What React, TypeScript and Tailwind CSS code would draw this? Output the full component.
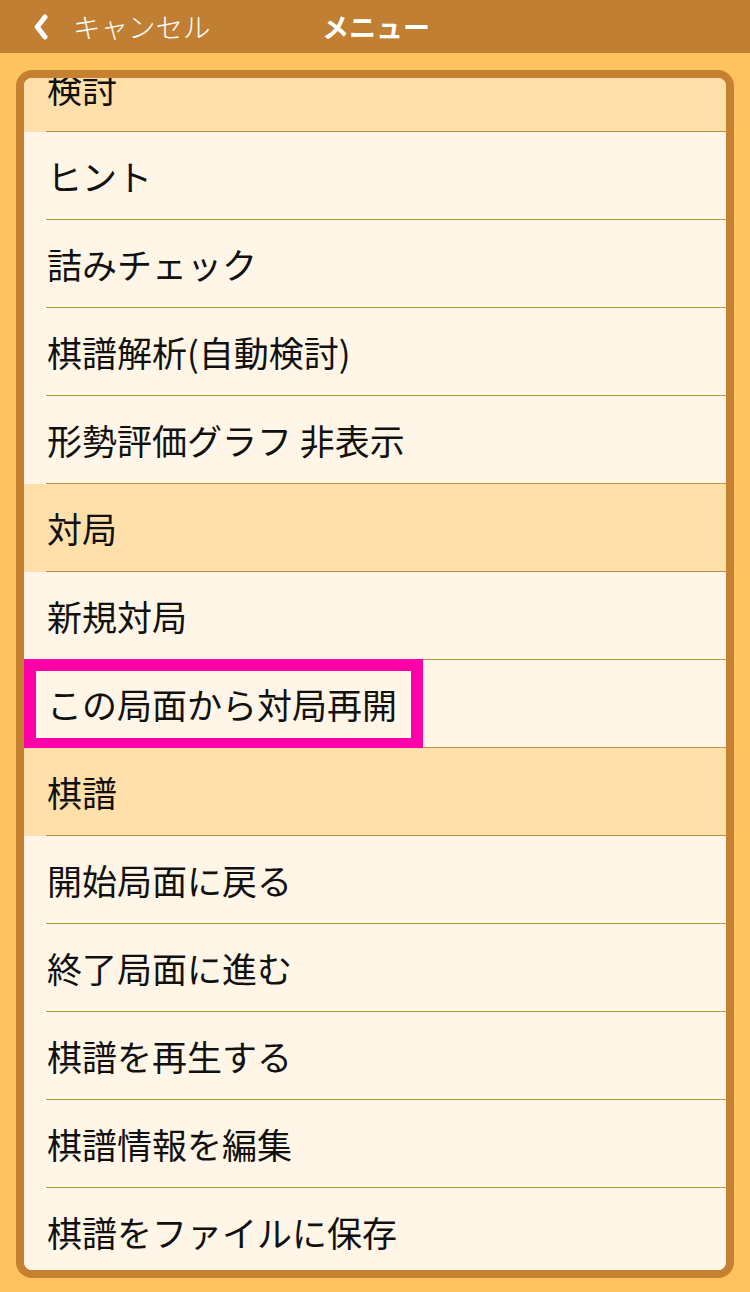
type Row = { label: string; section?: boolean; marked?: boolean }

const rows: Row[] = [
  { label: '検討', section: true },
  { label: 'ヒント' },
  { label: '詰みチェック' },
  { label: '棋譜解析(自動検討)' },
  { label: '形勢評価グラフ 非表示' },
  { label: '対局', section: true },
  { label: '新規対局' },
  { label: 'この局面から対局再開', marked: true },
  { label: '棋譜', section: true },
  { label: '開始局面に戻る' },
  { label: '終了局面に進む' },
  { label: '棋譜を再生する' },
  { label: '棋譜情報を編集' },
  { label: '棋譜をファイルに保存' },
]

const font = { fontFamily: '"Noto Sans CJK JP", "Noto Sans", sans-serif' }

function MenuRow({ row }: { row: Row }) {
  return (
    <div className={`relative h-[88px] pl-[22px] ${row.section ? 'bg-[#FFE0AA]' : 'bg-[#FFF6E7]'}`}>
      <div className="flex h-full items-center border-b border-[#B8953A] pl-px">
        <span className="text-[35px] leading-none text-[#111]">{row.label}</span>
      </div>
      {row.marked && (
        <div className="absolute left-0 -top-px h-[91px] w-[399px] border-[12px] border-[#FF00A8]" />
      )}
    </div>
  )
}

export default function App() {
  return (
    <div className="flex h-[1292px] w-[750px] flex-col overflow-hidden bg-[#FEC25F]" style={font}>
      <header className="relative flex h-[53px] shrink-0 items-center bg-[#C17F33] text-white">
        <div className="flex items-center pl-[34px]">
          <svg width="14" height="26" viewBox="0 0 14 26" fill="none">
            <path d="M11 3 L3.2 13 L11 23" stroke="white" strokeWidth="5" strokeLinecap="round" strokeLinejoin="round" />
          </svg>
          <span className="ml-[25px] text-[27.5px] font-light leading-none">キャンセル</span>
        </div>
        <span className="absolute left-[322px] text-[27px] font-bold leading-none">メニュー</span>
      </header>

      <div className="min-h-0 flex-1 px-4 pt-[17px] pb-[14px]">
        <div className="h-full overflow-hidden rounded-[16px] border-8 border-[#C58031] bg-[#FFF6E7]">
          <div className="-mt-[34px]">
            {rows.map((row) => (
              <MenuRow key={row.label} row={row} />
            ))}
          </div>
        </div>
      </div>
    </div>
  )
}
